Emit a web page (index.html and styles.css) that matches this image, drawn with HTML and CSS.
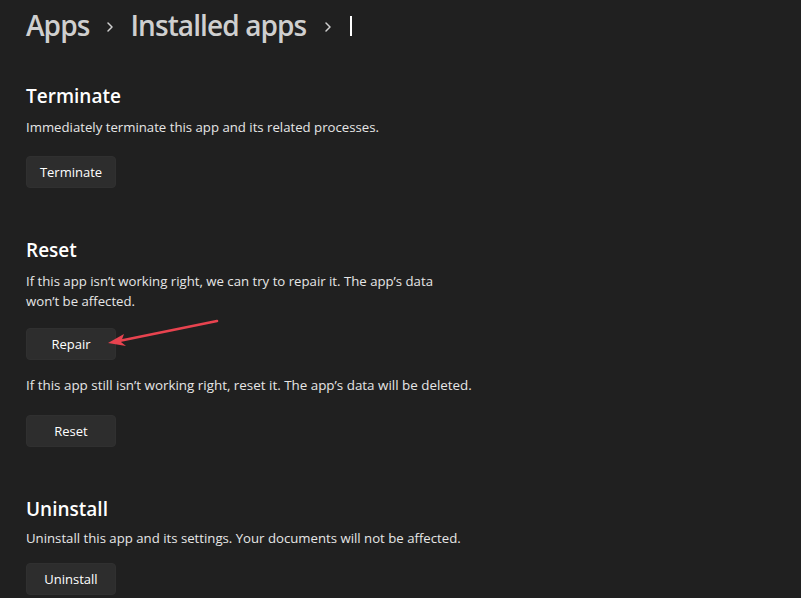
FILE: index.html
```html
<!DOCTYPE html>
<html lang="en">
<head>
    <meta charset="UTF-8">
    <title>Installed apps</title>
    <link rel="stylesheet" href="styles.css">
</head>
<body>
    <div class="page">
        <div class="breadcrumb">
            <span class="crumb">Apps</span>
            <span class="chevron">
                <svg width="8" height="12" viewBox="0 0 8 12"><path d="M2 2 L6 6 L2 10" fill="none" stroke="#cfcfcf" stroke-width="1.5" stroke-linecap="round" stroke-linejoin="round"/></svg>
            </span>
            <span class="crumb">Installed apps</span>
            <span class="chevron chevron-last">
                <svg width="8" height="12" viewBox="0 0 8 12"><path d="M2 2 L6 6 L2 10" fill="none" stroke="#cfcfcf" stroke-width="1.5" stroke-linecap="round" stroke-linejoin="round"/></svg>
            </span>
            <span class="caret"></span>
        </div>

        <div class="section section-terminate">
            <h2>Terminate</h2>
            <p>Immediately terminate this app and its related processes.</p>
            <button class="btn">Terminate</button>
        </div>

        <div class="section section-reset">
            <h2>Reset</h2>
            <p class="narrow">If this app isn’t working right, we can try to repair it. The app’s data won’t be affected.</p>
            <button class="btn btn-repair">Repair</button>
            <p class="after-repair">If this app still isn’t working right, reset it. The app’s data will be deleted.</p>
            <button class="btn">Reset</button>
        </div>

        <div class="section section-uninstall">
            <h2>Uninstall</h2>
            <p>Uninstall this app and its settings. Your documents will not be affected.</p>
            <button class="btn">Uninstall</button>
        </div>
    </div>

    <!-- annotation arrow pointing at Repair -->
    <svg class="arrow" width="801" height="598" viewBox="0 0 801 598">
        <line x1="217" y1="321" x2="114" y2="342" stroke="#e8434f" stroke-width="2.6" stroke-linecap="round"/>
        <path d="M108 343 L124 334 L121 342 L126 346 Z" fill="#e8434f"/>
    </svg>
</body>
</html>
```

FILE: styles.css
```css
body {
    margin: 0;
    background-color: #202020;
    color: #ffffff;
    font-family: "Open Sans", "Noto Sans", sans-serif;
    overflow: hidden;
}

.page {
    padding-left: 26px;
    padding-top: 4px;
}

.breadcrumb {
    display: flex;
    align-items: center;
    height: 42px;
}

.crumb {
    font-size: 28px;
    font-weight: 600;
    color: #cfcfcf;
    letter-spacing: -0.9px;
}

.chevron {
    display: flex;
    margin: 4px 16px 0 17px;
}

.chevron-last {
    margin-left: 18px;
    margin-right: 18px;
}

.caret {
    width: 2px;
    height: 20px;
    margin-top: 2px;
    background: #ffffff;
}

.section h2 {
    margin: 0;
    font-size: 19px;
    font-weight: 600;
    line-height: 28px;
}

.section p {
    margin: 7px 0 0;
    font-size: 13.2px;
    line-height: 20px;
    color: #e6e6e6;
}

.section-terminate {
    margin-top: 36px;
}

.section-reset {
    margin-top: 48px;
}

.section-uninstall {
    margin-top: 48px;
}

.narrow {
    max-width: 442px;
}

.btn {
    display: block;
    width: 90px;
    height: 32px;
    margin-top: 19px;
    background-color: #2d2d2d;
    color: #ffffff;
    border: 1px solid #303030;
    border-radius: 4px;
    font-family: inherit;
    font-size: 13px;
}

.btn-repair {
    margin-top: 17px;
}

.section p.after-repair {
    margin-top: 15px;
    font-size: 13.4px;
}

.section-reset .btn + p + .btn {
    margin-top: 20px;
}

.section-uninstall p {
    margin-top: 5px;
}

.section-uninstall .btn {
    margin-top: 15px;
}

.arrow {
    position: absolute;
    left: 0;
    top: 0;
    pointer-events: none;
}
```
